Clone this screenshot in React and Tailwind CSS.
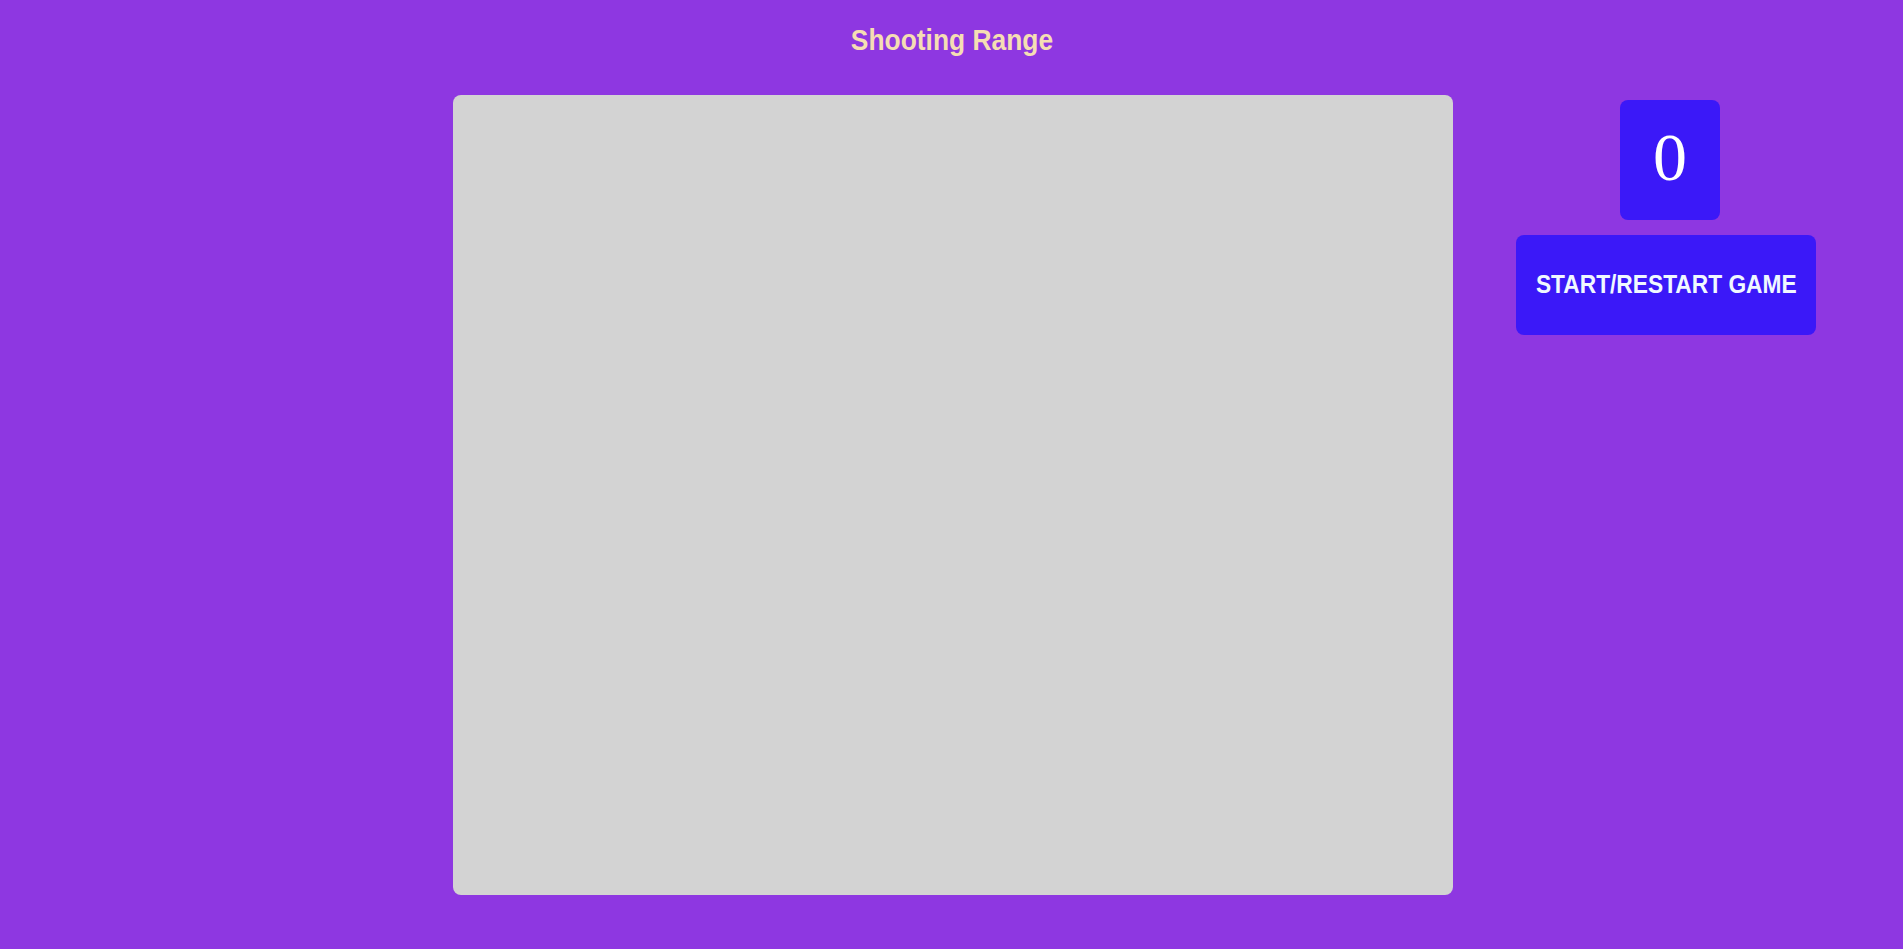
export default function App() {
  return (
    <div className="min-h-[949px] w-full bg-[#8e37e1] font-['Liberation_Sans',sans-serif]">
      <h1 className="pt-[22px] text-center text-[30px] font-bold leading-[36px] text-[#f5deb3]">
        <span className="inline-block scale-x-[0.88]">Shooting Range</span>
      </h1>

      <div className="mt-[37px] flex pl-[453px]">
        <div className="h-[800px] w-[1000px] rounded-lg bg-[#d3d3d3]" />
        <div className="ml-[63px] mt-[5px] flex w-[300px] flex-col items-center">
          <div className="ml-[8px] flex h-[120px] w-[100px] items-center justify-center rounded-lg bg-[#3b18f8] pb-[6px] font-['Liberation_Serif',serif] text-[68px] leading-none text-white">
            0
          </div>
          <button className="mt-[15px] h-[100px] w-[300px] rounded-lg bg-[#3b18f8] text-[25px] font-bold text-[#f0f8ff]">
            <span className="inline-block scale-x-[0.91]">START/RESTART GAME</span>
          </button>
        </div>
      </div>
    </div>
  );
}
